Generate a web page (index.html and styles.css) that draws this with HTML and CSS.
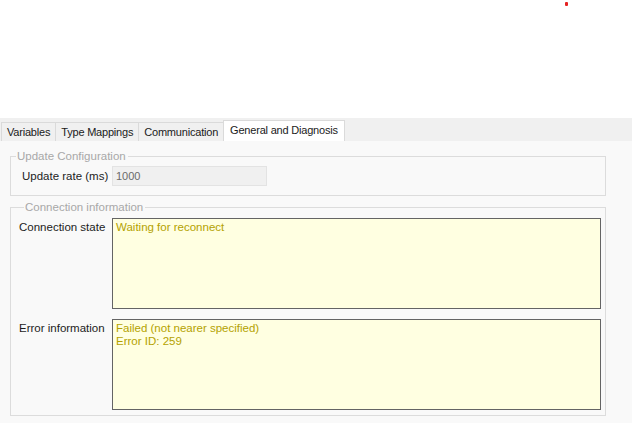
FILE: index.html
```html
<!DOCTYPE html>
<html>
<head>
<meta charset="utf-8">
<link rel="stylesheet" href="styles.css">
</head>
<body>
<div class="top"><span class="dot"></span></div>
<div class="tabs">
  <div class="tab">Variables</div>
  <div class="tab">Type Mappings</div>
  <div class="tab">Communication</div>
  <div class="tab active">General and Diagnosis</div>
</div>
<div class="panel">
  <fieldset class="group g1">
    <legend>Update Configuration</legend>
    <div class="row">
      <span class="lbl lbl1">Update rate (ms)</span>
      <div class="input">1000</div>
    </div>
  </fieldset>
  <fieldset class="group g2">
    <legend>Connection information</legend>
    <div class="trow">
      <span class="lbl">Connection state</span>
      <div class="area">Waiting for reconnect</div>
    </div>
    <div class="trow">
      <span class="lbl">Error information</span>
      <div class="area">Failed (not nearer specified)<br>Error ID: 259</div>
    </div>
  </fieldset>
</div>
</body>
</html>
```
FILE: styles.css
```css
html, body {
  margin: 0;
  padding: 0;
  background: #ffffff;
  font-family: "Liberation Sans", Arial, sans-serif;
  font-size: 11px;
  color: #222;
}
.top {
  height: 118px;
  position: relative;
  background: #fff;
}
.dot {
  position: absolute;
  left: 565px;
  top: 2px;
  width: 3px;
  height: 4px;
  border-radius: 1px;
  background: #e52222;
}
.tabs {
  height: 23px;
  background: #f0f0f0;
  display: flex;
  align-items: flex-end;
  padding-left: 1px;
  box-sizing: border-box;
}
.tab {
  height: 19px;
  box-sizing: border-box;
  border: 1px solid #dadada;
  border-bottom: none;
  margin-right: -1px;
  padding: 3px 5px 0 5px;
  background: #f0f0f0;
  color: #1a1a1a;
  font-size: 11px;
  letter-spacing: -0.2px;
  white-space: nowrap;
}
.tab.active {
  height: 21px;
  background: #ffffff;
  padding: 3px 6px 0 6px;
  position: relative;
  z-index: 1;
}
.panel {
  height: 282px;
  background: #f9f9f9;
  padding: 9px 26px 0 10px;
  box-sizing: border-box;
}
.group {
  margin: 0;
  border: 1px solid #dcdcdc;
  padding: 0;
  min-width: 0;
}
.group legend {
  color: #a8a8a8;
  font-size: 11.5px;
  padding: 0 2px 0 1px;
  margin-left: 5px;
  line-height: 13px;
}
.g1 {
  height: 46px;
  box-sizing: border-box;
}
.row {
  display: flex;
  align-items: center;
  padding: 3px 0 0 11px;
}
.lbl {
  width: 93px;
  flex: none;
  white-space: nowrap;
  color: #1c1c1c;
  font-size: 11.5px;
}
.lbl1 {
  width: 90px;
}
.input {
  width: 155px;
  height: 20px;
  box-sizing: border-box;
  background: #f0f0f0;
  border: 1px solid #e3e3e3;
  color: #6a6a6a;
  padding: 3px 0 0 3px;
}
.g2 {
  margin-top: 5px;
  height: 215px;
  box-sizing: border-box;
  padding: 4px 4px 0 8px;
}
.trow {
  display: flex;
  align-items: flex-start;
  margin-bottom: 10px;
}
.trow .lbl {
  padding-top: 3px;
}
.area {
  flex: 1;
  height: 91px;
  box-sizing: border-box;
  border: 1px solid #646464;
  background: #ffffe1;
  color: #b4a200;
  padding: 2px 3px;
  line-height: 13px;
  font-size: 11.5px;
}
```
